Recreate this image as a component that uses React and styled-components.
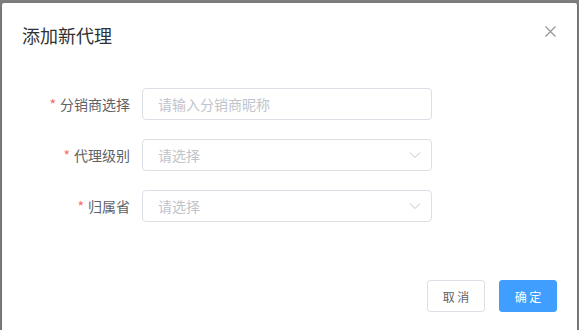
import React from "react";
import styled, { createGlobalStyle } from "styled-components";

const GlobalStyle = createGlobalStyle`
    html, body {
        margin: 0;
        padding: 0;
        height: 100%;
        overflow: hidden;
        background: #7f7f7f;
    }
    body {
        font-family: "Noto Sans CJK SC", "Noto Sans", sans-serif;
        -webkit-font-smoothing: antialiased;
    }
`;

const Overlay = styled.div`
    padding: 3px 2px 0 2px;
    height: 100vh;
    box-sizing: border-box;
`;

const Dialog = styled.div`
    background: #fff;
    border-radius: 2px;
    box-shadow: 0 1px 3px rgba(0, 0, 0, 0.3);
    min-height: 400px;
    display: flex;
    flex-direction: column;
`;

const Header = styled.div`
    display: flex;
    justify-content: space-between;
    align-items: flex-start;
    padding: 20px 20px 10px;
`;

const Title = styled.span`
    font-size: 18px;
    line-height: 24px;
    color: #303133;
`;

const CloseButton = styled.button`
    border: none;
    background: transparent;
    padding: 0;
    margin: 0 -1px 0 0;
    width: 16px;
    height: 16px;
    display: flex;
    align-items: center;
    justify-content: center;
    cursor: pointer;
`;

const Body = styled.div`
    padding: 31px 20px 48px;
`;

const FormItem = styled.div`
    display: flex;
    align-items: center;
    margin-bottom: ${({ last }) => (last ? "0" : "19px")};
`;

const Label = styled.label`
    width: 120px;
    box-sizing: border-box;
    padding-right: 12px;
    text-align: right;
    font-size: 14px;
    line-height: 32px;
    color: #606266;

    &::before {
        content: "*";
        color: #f56c6c;
        margin-right: 4px;
    }
`;

const InputWrap = styled.div`
    position: relative;
    width: 290px;
    height: 32px;
`;

const Input = styled.input`
    width: 100%;
    height: 32px;
    box-sizing: border-box;
    border: 1px solid #dcdfe6;
    border-radius: 4px;
    padding: 0 ${({ select }) => (select ? "30px" : "15px")} 0 15px;
    font-family: inherit;
    font-size: 14px;
    color: #606266;
    outline: none;
    cursor: ${({ select }) => (select ? "pointer" : "text")};

    &::placeholder {
        color: #c0c4cc;
    }
`;

const Arrow = styled.svg`
    position: absolute;
    right: 11px;
    top: 11px;
    pointer-events: none;
`;

const Footer = styled.div`
    display: flex;
    justify-content: flex-end;
    gap: 14px;
    padding: 10px 20px 20px;
`;

const Button = styled.button`
    width: 58px;
    height: 32px;
    padding: 0;
    font-family: inherit;
    font-size: 12px;
    border-radius: 3px;
    cursor: pointer;
    border: 1px solid ${({ primary }) => (primary ? "#409eff" : "#dcdfe6")};
    background: ${({ primary }) => (primary ? "#409eff" : "#fff")};
    color: ${({ primary }) => (primary ? "#fff" : "#606266")};
    white-space: pre;
`;

const fields = [
    { label: "分销商选择", placeholder: "请输入分销商昵称" },
    { label: "代理级别", placeholder: "请选择", select: true },
    { label: "归属省", placeholder: "请选择", select: true },
];

const App = () => (
    <Overlay>
        <GlobalStyle />
        <Dialog>
            <Header>
                <Title>添加新代理</Title>
                <CloseButton aria-label="Close">
                    <svg width="11" height="11" viewBox="0 0 11 11">
                        <path d="M0.5 0.5L10.5 10.5M10.5 0.5L0.5 10.5" stroke="#909399" strokeWidth="1.1" fill="none" />
                    </svg>
                </CloseButton>
            </Header>
            <Body>
                {fields.map((field, index) => (
                    <FormItem key={index} last={index === fields.length - 1}>
                        <Label>{field.label}</Label>
                        <InputWrap>
                            <Input
                                select={field.select}
                                placeholder={field.placeholder}
                                readOnly={field.select}
                            />
                            {field.select && (
                                <Arrow width="12" height="10" viewBox="0 0 12 10">
                                    <path d="M1 2.5L6 7.5L11 2.5" stroke="#c0c4cc" strokeWidth="1" fill="none" />
                                </Arrow>
                            )}
                        </InputWrap>
                    </FormItem>
                ))}
            </Body>
            <Footer>
                <Button>{"取 消"}</Button>
                <Button primary>{"确 定"}</Button>
            </Footer>
        </Dialog>
    </Overlay>
);

export default App;
